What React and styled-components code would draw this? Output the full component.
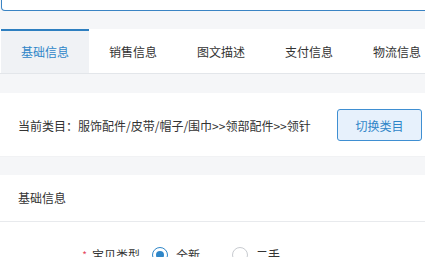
import React from "react";
import styled, { createGlobalStyle } from "styled-components";

const Global = createGlobalStyle`
  html, body { margin: 0; padding: 0; background: #f5f6f8; }
  body { font-family: "Noto Sans CJK SC", "Noto Sans", sans-serif; font-size: 12px; color: #333; overflow: hidden; }
`;

const Page = styled.div`
  width: 425px;
  display: flex;
  flex-direction: column;
`;

const SearchBox = styled.div`
  height: 10px;
  margin-left: 1px;
  margin-right: -20px;
  background: #fff;
  border: 1px solid #3a84c4;
  border-top: none;
  border-radius: 0 0 4px 4px;
`;

const Tabs = styled.div`
  margin-top: 18px;
  height: 44px;
  background: #fff;
  border-bottom: 1px solid #e3e6ea;
  display: flex;
  padding-left: 1px;
`;

const Tab = styled.div`
  width: 88px;
  flex: none;
  box-sizing: border-box;
  display: flex;
  align-items: center;
  justify-content: center;
  border-top: 2px solid ${(p) => (p.$active ? "#2e7fc0" : "transparent")};
  background: ${(p) => (p.$active ? "#f0f2f5" : "#fff")};
  color: ${(p) => (p.$active ? "#2f86c8" : "#333")};
  font-size: 12px;
  padding-bottom: 2px;
`;

const Panel = styled.div`
  background: #fff;
  margin-top: 19px;
`;

const CategoryRow = styled.div`
  height: 64px;
  display: flex;
  align-items: center;
  justify-content: space-between;
  padding: 0 3px 0 18px;
  box-shadow: inset 0 -1px 0 #f1f2f4;
`;

const CategoryText = styled.div`
  font-size: 12px;
  color: #333;
`;

const SwitchButton = styled.button`
  width: 85px;
  height: 32px;
  box-sizing: border-box;
  border: 1px solid #3f8fd2;
  border-radius: 3px;
  background: #e7f1fc;
  color: #2f86c8;
  font-family: inherit;
  font-size: 12px;
  padding: 0;
`;

const Section = styled.div`
  background: #fff;
  margin-top: 18px;
`;

const SectionTitle = styled.div`
  height: 47px;
  box-sizing: border-box;
  display: flex;
  align-items: center;
  padding-left: 18px;
  padding-bottom: 1px;
  border-bottom: 1px solid #e8eaed;
  font-size: 12px;
  color: #333;
`;

const FormRow = styled.div`
  display: flex;
  padding-top: 24px;
  height: 40px;
  align-items: flex-start;
`;

const Label = styled.div`
  width: 152px;
  flex: none;
  display: flex;
  justify-content: flex-end;
  align-items: center;
  padding-right: 12px;
  box-sizing: border-box;
  color: #333;
`;

const Star = styled.span`
  color: #e5475f;
  font-size: 10px;
  margin-right: 5px;
`;

const RadioGroup = styled.div`
  display: flex;
  align-items: center;
`;

const RadioItem = styled.label`
  display: flex;
  align-items: center;
  margin-right: 32px;
  color: #333;
`;

const RadioDot = styled.span`
  width: 16px;
  height: 16px;
  box-sizing: border-box;
  border-radius: 50%;
  border: 1px solid ${(p) => (p.$checked ? "#2f86c8" : "#c8cbd0")};
  display: flex;
  align-items: center;
  justify-content: center;
  margin-right: 8px;
  background: #fff;
  &::after {
    content: "";
    width: 8px;
    height: 8px;
    border-radius: 50%;
    background: ${(p) => (p.$checked ? "#2f86c8" : "transparent")};
  }
`;

const tabs = ["基础信息", "销售信息", "图文描述", "支付信息", "物流信息"];

export default function App() {
  return (
    <>
      <Global />
      <Page>
        <SearchBox />
        <Tabs>
          {tabs.map((t, i) => (
            <Tab key={t} $active={i === 0}>
              {t}
            </Tab>
          ))}
        </Tabs>
        <Panel>
          <CategoryRow>
            <CategoryText>当前类目：服饰配件/皮带/帽子/围巾&gt;&gt;领部配件&gt;&gt;领针</CategoryText>
            <SwitchButton>切换类目</SwitchButton>
          </CategoryRow>
        </Panel>
        <Section>
          <SectionTitle>基础信息</SectionTitle>
          <FormRow>
            <Label>
              <Star>*</Star>宝贝类型
            </Label>
            <RadioGroup>
              <RadioItem>
                <RadioDot $checked />
                全新
              </RadioItem>
              <RadioItem>
                <RadioDot />
                二手
              </RadioItem>
            </RadioGroup>
          </FormRow>
        </Section>
      </Page>
    </>
  );
}
